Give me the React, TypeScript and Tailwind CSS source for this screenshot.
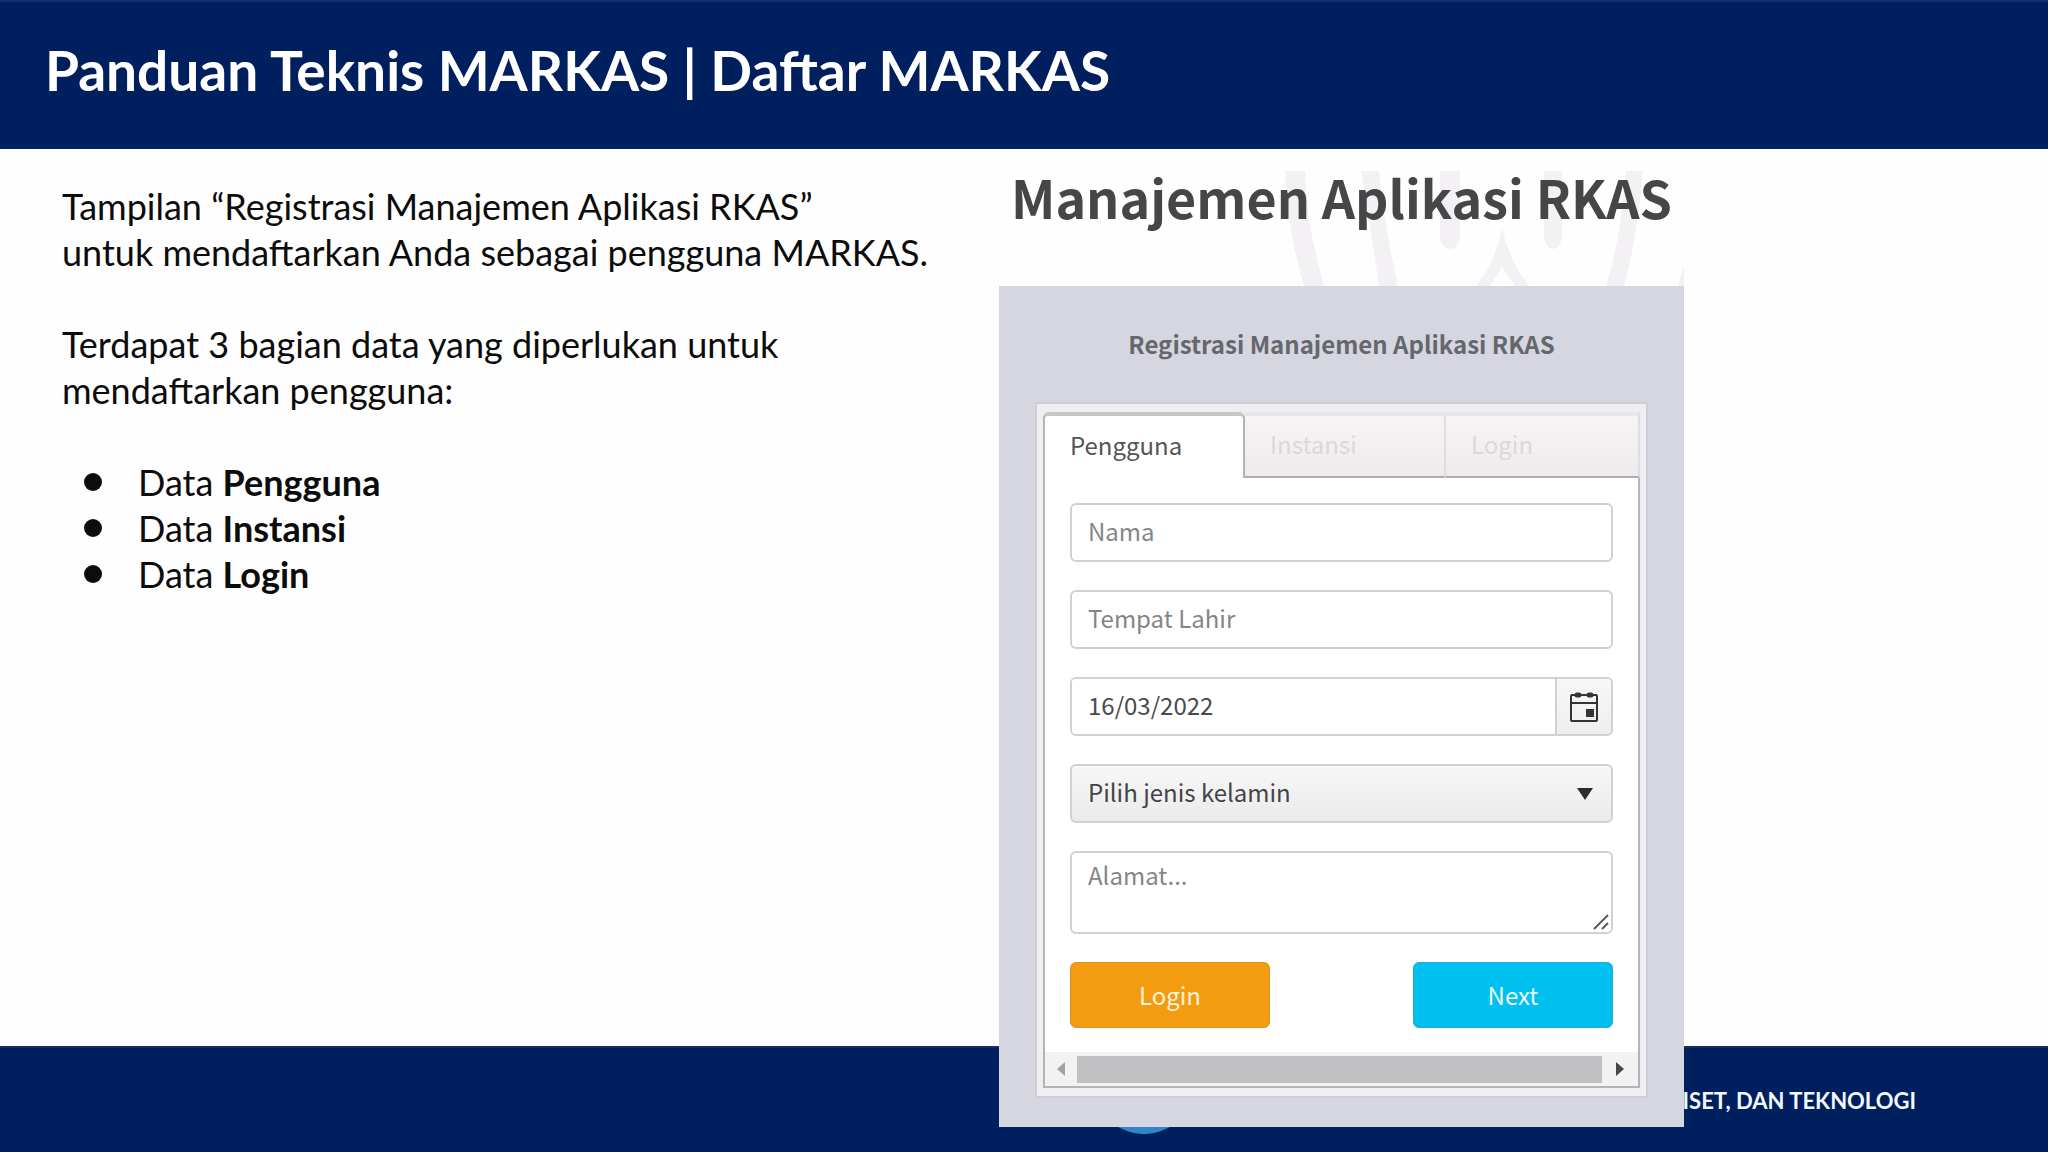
import { useState } from "react";

type Tab = "Pengguna" | "Instansi" | "Login";

const tabs: Tab[] = ["Pengguna", "Instansi", "Login"];

const fieldClass =
  "block w-full rounded-md border-2 border-[#d0d0d6] bg-white px-4 text-[#4a4a4c] placeholder:text-[#858587] outline-none focus:border-sky-400";

function CalendarIcon() {
  return (
    <svg width="28" height="30" viewBox="0 0 28 30" fill="none" stroke="#333335" strokeWidth="2">
      <rect x="1" y="3" width="26" height="26" rx="1" />
      <path d="M1 11h26" />
      <path d="M7 3h2M19 3h2" strokeWidth="5" strokeLinecap="round" />
      <rect x="16" y="17" width="8" height="8" fill="#333335" stroke="none" />
    </svg>
  );
}

function Watermark() {
  return (
    <svg
      className="absolute inset-0 h-full w-full"
      viewBox="0 0 685 137"
      preserveAspectRatio="none"
      fill="#f3f1f3"
      aria-hidden="true"
    >
      <path d="M286 22h20Q308 80 325 137h-20Q288 80 286 22z" />
      <path d="M362 22h18Q386 80 399 137h-19Q372 80 362 22z" />
      <path d="M441 22h20v66q-2 12-10 12t-10-12z" />
      <path d="M545 22h18v66q-2 12-9 12t-9-12z" />
      <path d="M503 79Q510 112 530 137h-14L503 118 491 137h-14Q497 112 503 79z" />
      <path d="M627 22h17Q638 90 625 137h-18Q622 90 627 22z" />
      <path d="M685 116v21h-6z" />
    </svg>
  );
}

function RegistrationForm() {
  const [tab, setTab] = useState<Tab>("Pengguna");
  const [date, setDate] = useState("16/03/2022");

  return (
    <div className="border-2 border-[#cdcdd3] bg-[#efeff3] px-1.5 pt-2 pb-2">
      {/* Tabs */}
      <div role="tablist" className="grid grid-cols-[202fr_201fr_194fr] text-2xl">
        {tabs.map((name) => (
          <button
            key={name}
            type="button"
            role="tab"
            aria-selected={tab === name}
            disabled={name !== "Pengguna"}
            onClick={() => setTab(name)}
            className={
              tab === name
                ? "h-[66px] rounded-t-md border-x-2 border-t-4 border-x-[#b4b4b6] border-t-[#c3c8c6] bg-white px-[25px] pb-1 text-left text-[#545456]"
                : "h-[66px] border-t-4 border-r-2 border-b-2 border-t-[#e8e6e8] border-r-[#dfdde0] border-b-[#aeacaf] bg-linear-to-b from-[#f7f4f6] to-[#efebed] px-[25px] pb-1 text-left text-[#dad8db]"
            }
          >
            {name}
          </button>
        ))}
      </div>

      <div className="border-x-2 border-b-2 border-[#b4b4b6] bg-white">
        <form className="flex flex-col gap-7 px-[25px] pt-[25px] pb-6 text-2xl">
          <input type="text" aria-label="Nama" placeholder="Nama" className={`${fieldClass} h-[59px] pb-1`} />
          <input
            type="text"
            aria-label="Tempat Lahir"
            placeholder="Tempat Lahir"
            className={`${fieldClass} h-[59px] pb-1`}
          />
          <div className="flex h-[59px] overflow-hidden rounded-md border-2 border-[#d0d0d6]">
            <input
              type="text"
              aria-label="Tanggal Lahir"
              value={date}
              onChange={(e) => setDate(e.target.value)}
              className="min-w-0 flex-1 bg-white px-4 pb-1 text-[#4a4a4c] outline-none"
            />
            <button
              type="button"
              aria-label="Pilih tanggal"
              className="flex w-14 items-center justify-center border-l-2 border-[#d0d0d6] bg-linear-to-b from-[#f8f8f8] to-[#efeeef]"
            >
              <CalendarIcon />
            </button>
          </div>
          <div className="relative">
            <select
              aria-label="Jenis kelamin"
              className="block h-[59px] w-full appearance-none rounded-md border-2 border-[#d0d0d6] bg-linear-to-b from-[#f7f7f8] to-[#ebebec] px-4 pb-1 text-[#444446] outline-none"
            >
              <option>Pilih jenis kelamin</option>
            </select>
            <svg
              className="pointer-events-none absolute top-6 right-5"
              width="16"
              height="12"
              viewBox="0 0 16 12"
              fill="#2c2c2e"
            >
              <path d="M0 0h16L8 12z" />
            </svg>
          </div>
          <div className="relative">
            <textarea
              aria-label="Alamat"
              placeholder="Alamat..."
              className={`${fieldClass} h-[83px] resize-none pt-1.5`}
            />
            <svg
              className="pointer-events-none absolute right-1 bottom-1"
              width="16"
              height="16"
              viewBox="0 0 16 16"
              stroke="#5c5c5e"
              strokeWidth="2"
            >
              <path d="M1 15L15 1M9 15l6-6" />
            </svg>
          </div>
          <div className="flex justify-between">
            <button
              type="button"
              className="h-[66px] w-[200px] rounded-md border border-[#d9952c] bg-[#f39c12] text-[#fff4dc]"
            >
              Login
            </button>
            <button
              type="button"
              className="h-[66px] w-[200px] rounded-md border border-[#20acd4] bg-[#00c0ef] text-[#e8faff]"
            >
              Next
            </button>
          </div>
        </form>

        {/* Horizontal scroll bar */}
        <div className="flex h-[34px] items-center bg-[#f2f2f3]">
          <button type="button" aria-label="Gulir kiri" className="flex w-8 justify-center">
            <svg width="8" height="14" viewBox="0 0 8 14" fill="#a3a3a5">
              <path d="M8 0v14L0 7z" />
            </svg>
          </button>
          <div className="h-[27px] flex-1 bg-[#c0bfc2]" />
          <button type="button" aria-label="Gulir kanan" className="flex w-9 justify-center">
            <svg width="8" height="14" viewBox="0 0 8 14" fill="#48484a">
              <path d="M0 0v14l8-7z" />
            </svg>
          </button>
        </div>
      </div>
    </div>
  );
}

export default function App() {
  return (
    <div className="flex min-h-screen flex-col bg-[#fefefe] font-['Lato',sans-serif]">
      <header className="flex h-[149px] items-center border-t-2 border-[#14306c] bg-[#001f5f] px-[45px] pb-3">
        <h1 className="text-[55px] leading-[64px] font-bold text-white">Panduan Teknis MARKAS | Daftar MARKAS</h1>
      </header>

      <main className="grid flex-1 grid-cols-[999fr_685fr_364fr]">
        <section className="px-[62px] pt-[34px] text-4xl leading-[46px] text-[#0c0c0c]">
          <p>
            Tampilan “Registrasi Manajemen Aplikasi RKAS”
            <br />
            untuk mendaftarkan Anda sebagai pengguna MARKAS.
          </p>
          <p className="mt-[46px]">
            Terdapat 3 bagian data yang diperlukan untuk
            <br />
            mendaftarkan pengguna:
          </p>
          <ul className="mt-[46px]">
            {tabs.map((name) => (
              <li key={name} className="flex items-center">
                <span className="mr-9 ml-[22px] size-[18px] rounded-full bg-[#0c0c0c]" />
                <span>
                  Data <strong className="font-bold">{name}</strong>
                </span>
              </li>
            ))}
          </ul>
        </section>

        {/* The form card hangs over the footer */}
        <section className="relative z-10 -mb-[81px] font-['Noto_Sans_CJK_JP',sans-serif]">
          <div className="relative h-[137px] pt-3.5">
            <Watermark />
            <h2 className="relative text-center text-[52px] leading-[68px] font-bold whitespace-nowrap text-[#464648]">
              Manajemen Aplikasi RKAS
            </h2>
          </div>
          <div className="bg-[#d5d6df] px-9 pb-[29px]">
            <h3 className="pt-10 pb-10 text-center text-2xl leading-9 font-bold text-[#66676d]">
              Registrasi Manajemen Aplikasi RKAS
            </h3>
            <RegistrationForm />
          </div>
        </section>
      </main>

      <footer className="grid h-[107px] grid-cols-[1093fr_823fr_132fr] border-t-2 border-[#1a2d5c] bg-[#001f5f]">
        <div />
        <div className="flex items-center justify-between">
          <svg width="102" height="102" viewBox="0 0 102 102" className="-mt-4 self-start">
            <circle cx="51" cy="51" r="51" fill="#2f86c9" />
          </svg>
          <p className="text-[22px] leading-8 font-bold text-[#f4f8ff]">RISET, DAN TEKNOLOGI</p>
        </div>
      </footer>
    </div>
  );
}
